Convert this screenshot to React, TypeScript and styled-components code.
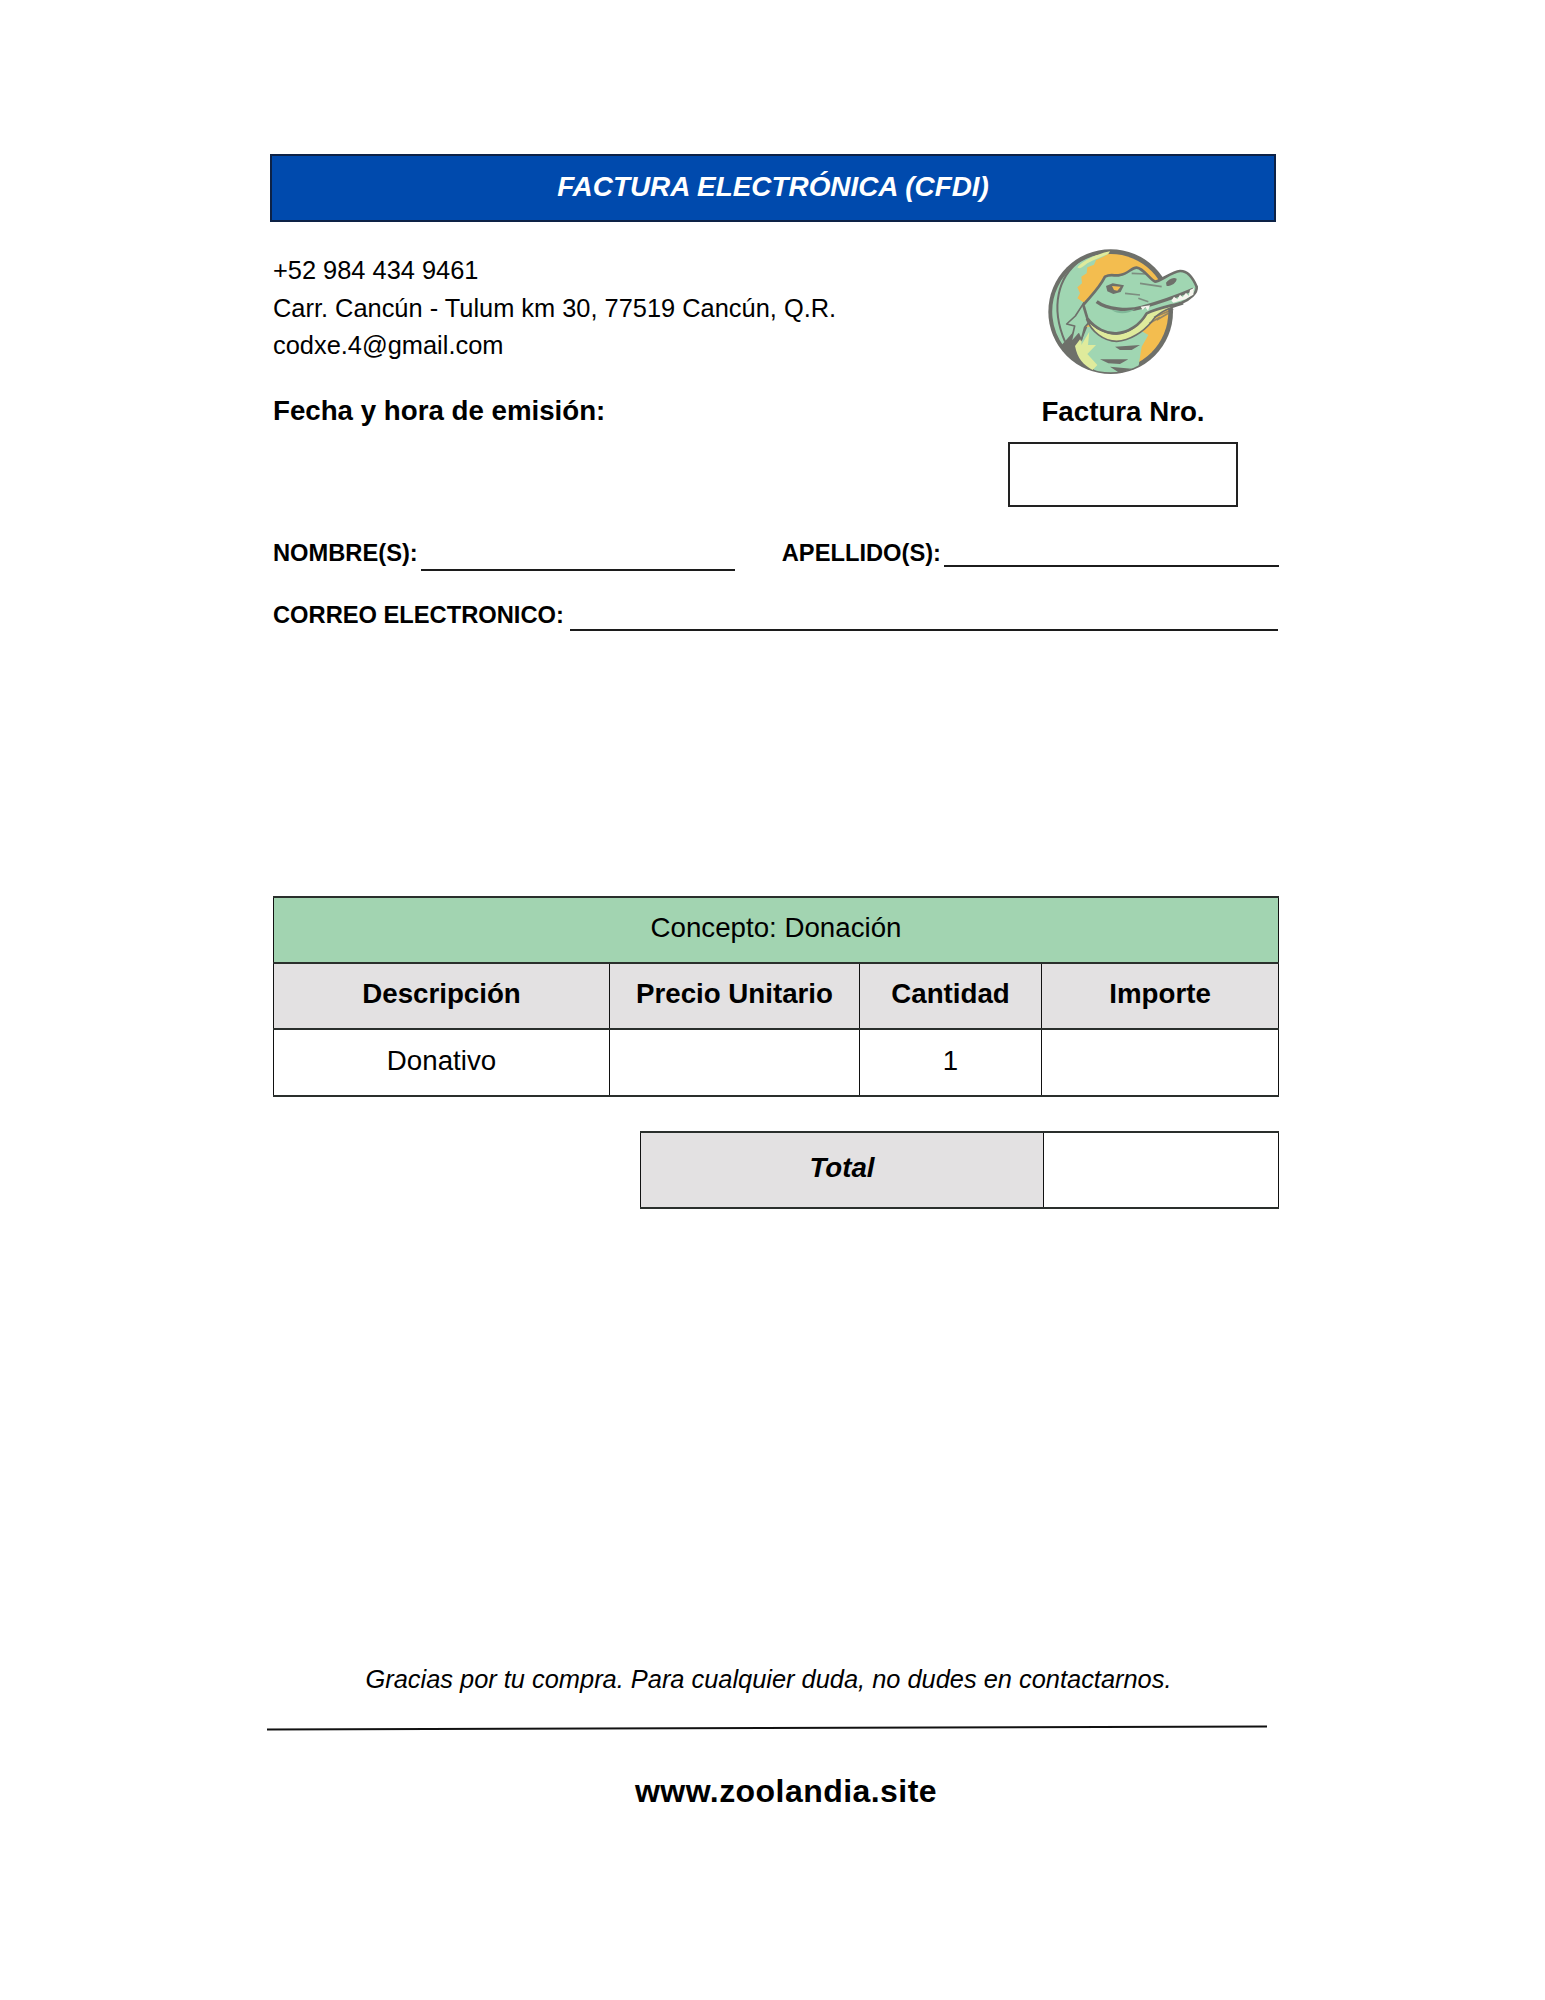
import React from "react";
import styled, { createGlobalStyle } from "styled-components";

const GlobalStyle = createGlobalStyle`
  html, body {
    margin: 0;
    padding: 0;
    background: #fff;
  }
  body {
    font-family: "Liberation Sans", Arial, sans-serif;
    color: #000;
  }
`;

const S = {
  Page: styled.div`
    width: 1545px;
    height: 2000px;
    box-sizing: border-box;
    padding: 154px 0 0 270px;
    overflow: hidden;
  `,
  Banner: styled.div`
    width: 1006px;
    height: 68px;
    box-sizing: border-box;
    border: 2px solid #0d2246;
    background: #004aad;
    color: #fff;
    font-size: 27.9px;
    font-weight: 700;
    font-style: italic;
    padding-bottom: 2px;
    display: flex;
    align-items: center;
    justify-content: center;
  `,
  Header: styled.div`
    display: flex;
    justify-content: space-between;
    width: 970px;
    margin: 8px 0 0 3px;
  `,
  Contact: styled.div`
    padding-top: 22px;
  `,
  ContactLine: styled.div`
    font-size: 25.4px;
    line-height: 37.5px;
  `,
  IssueDate: styled.div`
    font-size: 27.7px;
    font-weight: 700;
    line-height: 34px;
    margin-top: 29px;
  `,
  InvoiceCol: styled.div`
    width: 240px;
    display: flex;
    flex-direction: column;
    align-items: center;
  `,
  Logo: styled.svg`
    display: block;
    width: 240px;
    height: 160px;
  `,
  InvoiceLabel: styled.div`
    font-size: 27.7px;
    font-weight: 700;
    line-height: 34px;
    margin-top: 5px;
  `,
  InvoiceBox: styled.div`
    width: 230px;
    height: 65px;
    box-sizing: border-box;
    border: 2px solid #222;
    margin-top: 13px;
  `,
  FieldRow: styled.div<{ $top: number }>`
    display: flex;
    align-items: flex-end;
    margin: ${(p) => p.$top}px 0 0 3px;
    height: 30px;
  `,
  FieldLabel: styled.div<{ $gap?: number }>`
    font-size: 23.7px;
    font-weight: 700;
    line-height: 30px;
    white-space: nowrap;
    margin-left: ${(p) => p.$gap ?? 0}px;
  `,
  FieldRule: styled.div<{ $w: number; $gap: number; $drop: number }>`
    width: ${(p) => p.$w}px;
    height: 2px;
    background: #1c1c1c;
    margin-left: ${(p) => p.$gap}px;
    margin-bottom: ${(p) => p.$drop}px;
    flex: none;
  `,
  Table: styled.table<{ $top: number; $left: number; $w: number }>`
    border-collapse: collapse;
    table-layout: fixed;
    width: ${(p) => p.$w}px;
    margin: ${(p) => p.$top}px 0 0 ${(p) => p.$left}px;
  `,
  Cell: styled.td<{ $bg?: string; $bold?: boolean; $italic?: boolean; $h?: number }>`
    height: ${(p) => p.$h ?? 66}px;
    padding: 0 0 4px;
    box-sizing: border-box;
    border-style: solid;
    border-width: 2px 1px;
    border-color: #2a2f2c #111;
    text-align: center;
    vertical-align: middle;
    font-size: 27.7px;
    background: ${(p) => p.$bg ?? "#fff"};
    font-weight: ${(p) => (p.$bold ? 700 : 400)};
    font-style: ${(p) => (p.$italic ? "italic" : "normal")};
  `,
  Thanks: styled.div`
    width: 1003px;
    margin: 453px 0 0 -3px;
    text-align: center;
    font-size: 25.4px;
    font-style: italic;
    line-height: 34px;
  `,
  FooterRule: styled.div`
    width: 1000px;
    height: 2px;
    background: #111;
    margin: 31px 0 0 -3px;
    transform: rotate(-0.17deg);
  `,
  Site: styled.div`
    width: 1032px;
    margin: 43px 0 0 0;
    text-align: center;
    font-size: 32px;
    font-weight: 700;
    letter-spacing: 0.45px;
    line-height: 38px;
  `,
};

const GATOR = "#a0d6b2";
const GREY = "#6e6f6b";
const PALE = "#dfeb9c";
const AMBER = "#f3bd50";

const CrocLogo = () => (
  <S.Logo viewBox="9 0 720 480" aria-label="Logo">
    <defs>
      <filter id="soft">
        <feGaussianBlur stdDeviation="2.2" />
      </filter>
      <clipPath id="disc">
        <circle cx="332" cy="245" r="182" />
      </clipPath>
    </defs>
    <g filter="url(#soft)">
      <circle cx="332" cy="245" r="187" fill={GREY} />
      <circle cx="332" cy="245" r="173" fill={AMBER} />
      {/* back plate */}
      <path
        d="M325 71A174 174 0 0 0 192 350L250 320L262 225L232 205L240 190L232 172L246 160L244 140L260 130L262 112L282 104L288 90L310 80Z"
        fill={GATOR}
      />
      <path d="M330 64C290 72 252 90 232 112C240 120 250 108 262 100C285 88 305 80 325 72Z" fill={PALE} />
      <path d="M240 92C175 140 150 230 195 335" fill="none" stroke={GREY} strokeWidth="6" />
      <path d="M185 345A174 174 0 0 0 300 425L290 360L262 290L225 300Z" fill={GREY} />
      {/* neck */}
      <path
        clipPath="url(#disc)"
        d="M262 290L240 345L250 395L300 432L412 432L425 350L445 315L420 300Z"
        fill={GATOR}
      />
      <path
        d="M225 348L246 320L244 345L268 305L264 345L288 345L262 372L292 405L278 420C250 405 232 385 225 348Z"
        fill={PALE}
      />
      <path d="M345 350L420 345L395 360L360 360Z M300 388L385 388L360 402L325 400Z M330 410L395 416L360 430Z" fill={GREY} />
      {/* frill */}
      <path
        d="M252 218L226 258L200 282L224 288L212 340L236 312L244 330L254 292L280 262L300 240Z"
        fill={GATOR}
        stroke={GREY}
        strokeWidth="5"
        strokeLinejoin="round"
      />
      {/* lower jaw strip */}
      <path
        d="M548 222C510 232 470 250 455 275C430 305 390 332 350 334C310 334 275 305 260 268C285 295 320 312 350 312C385 310 420 285 440 250C470 235 510 226 548 222Z"
        fill={PALE}
        stroke={GREY}
        strokeWidth="5"
        strokeLinejoin="round"
      />
      <path d="M462 262L520 238M470 270L505 250M448 280L480 262" stroke={GREY} strokeWidth="5" opacity="0.7" />
      {/* head */}
      <path
        d="M315 140C335 130 345 140 360 135C385 132 395 112 410 113C430 115 450 148 465 155C480 155 515 125 540 123C560 122 575 135 590 170C592 190 570 208 545 218C510 228 470 235 440 250C420 285 385 308 350 310C320 312 285 295 262 265L250 225C265 205 295 180 315 140Z"
        fill={GATOR}
        stroke={GREY}
        strokeWidth="8"
        strokeLinejoin="round"
      />
      {/* eye, nostril, wrinkles */}
      <path d="M318 168L338 160L372 166L362 186L340 192L322 184Z" fill={GREY} />
      <path d="M336 168L362 170L352 182L342 180Z" fill={AMBER} />
      <path d="M498 158C505 148 520 140 530 146C530 158 515 168 500 168Z" fill={GREY} />
      <path
        d="M420 160L485 170M375 190L420 195M415 205L445 215M395 130L440 132"
        fill="none"
        stroke={GREY}
        strokeWidth="5"
        opacity="0.7"
      />
      {/* mouth and teeth */}
      <path
        d="M290 215C320 238 385 245 425 232C470 220 510 208 580 178"
        fill="none"
        stroke={GREY}
        strokeWidth="10"
      />
      <path d="M335 240C355 255 385 252 405 238L370 244Z" fill="#7fb898" />
      <path
        d="M422 230L450 226L444 242L436 232L428 240Z M506 204L514 212L522 200L532 208L540 194L548 202L558 188L566 198L570 180L582 174L580 194L556 208L520 218Z"
        fill="#f6f6ee"
      />
    </g>
  </S.Logo>
);

const App = () => (
  <>
    <GlobalStyle />
    <S.Page>
      <S.Banner>FACTURA ELECTRÓNICA (CFDI)</S.Banner>

      <S.Header>
        <S.Contact>
          <S.ContactLine>+52 984 434 9461</S.ContactLine>
          <S.ContactLine>Carr. Cancún - Tulum km 30, 77519 Cancún, Q.R.</S.ContactLine>
          <S.ContactLine>codxe.4@gmail.com</S.ContactLine>
          <S.IssueDate>Fecha y hora de emisión:</S.IssueDate>
        </S.Contact>
        <S.InvoiceCol>
          <CrocLogo />
          <S.InvoiceLabel>Factura Nro.</S.InvoiceLabel>
          <S.InvoiceBox />
        </S.InvoiceCol>
      </S.Header>

      <S.FieldRow $top={31}>
        <S.FieldLabel>NOMBRE(S):</S.FieldLabel>
        <S.FieldRule $w={314} $gap={3} $drop={-3} />
        <S.FieldLabel $gap={47}>APELLIDO(S):</S.FieldLabel>
        <S.FieldRule $w={335} $gap={3} $drop={1} />
      </S.FieldRow>
      <S.FieldRow $top={32}>
        <S.FieldLabel>CORREO ELECTRONICO:</S.FieldLabel>
        <S.FieldRule $w={708} $gap={6} $drop={-1} />
      </S.FieldRow>

      <S.Table $top={266} $left={3} $w={1005}>
        <colgroup>
          <col style={{ width: 336 }} />
          <col style={{ width: 250 }} />
          <col style={{ width: 182 }} />
          <col style={{ width: 237 }} />
        </colgroup>
        <tbody>
          <tr>
            <S.Cell colSpan={4} $bg="#a2d4b1">
              Concepto: Donación
            </S.Cell>
          </tr>
          <tr>
            <S.Cell $bg="#e3e1e2" $bold>Descripción</S.Cell>
            <S.Cell $bg="#e3e1e2" $bold>Precio Unitario</S.Cell>
            <S.Cell $bg="#e3e1e2" $bold>Cantidad</S.Cell>
            <S.Cell $bg="#e3e1e2" $bold>Importe</S.Cell>
          </tr>
          <tr>
            <S.Cell $h={67}>Donativo</S.Cell>
            <S.Cell $h={67} />
            <S.Cell $h={67}>1</S.Cell>
            <S.Cell $h={67} />
          </tr>
        </tbody>
      </S.Table>

      <S.Table $top={34} $left={370} $w={638}>
        <colgroup>
          <col style={{ width: 403 }} />
          <col style={{ width: 235 }} />
        </colgroup>
        <tbody>
          <tr>
            <S.Cell $bg="#e3e1e2" $bold $italic $h={76}>
              Total
            </S.Cell>
            <S.Cell $h={76} />
          </tr>
        </tbody>
      </S.Table>

      <S.Thanks>Gracias por tu compra. Para cualquier duda, no dudes en contactarnos.</S.Thanks>
      <S.FooterRule />
      <S.Site>www.zoolandia.site</S.Site>
    </S.Page>
  </>
);

export default App;
